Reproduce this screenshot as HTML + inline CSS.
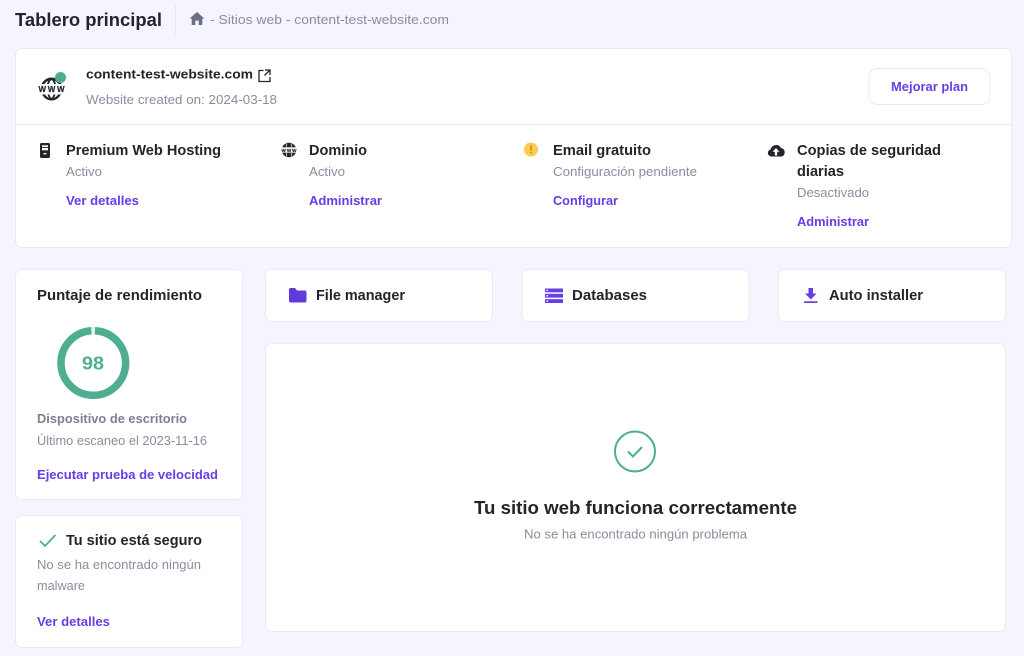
<!DOCTYPE html>
<html lang="es"><head><meta charset="utf-8"><title>Tablero principal</title>
<style>
html,body{margin:0;padding:0;background:#f4f5ff;width:1024px;height:656px;overflow:hidden}
svg{display:block;filter:blur(.3px)}
text{font-family:"Liberation Sans",sans-serif;white-space:pre}
.h{font-weight:700;fill:#23252b;font-size:15px}
.g{fill:#8b8c9f;font-size:13px}
.l{font-weight:700;fill:#673de6;font-size:13px}
.c{fill:#fff;stroke:#e9eaf3;stroke-width:1}
</style></head><body>
<svg width="1024" height="656" viewBox="0 0 1024 656" xmlns="http://www.w3.org/2000/svg">
<rect width="1024" height="656" fill="#f4f5ff"/>
<text x="15" y="26" textLength="147" lengthAdjust="spacingAndGlyphs" font-size="18" font-weight="700" fill="#23252b">Tablero principal</text>
<rect x="175" y="5" width="1" height="29" fill="#e6e7f1"/>
<path d="M197 12l-7.500 6.600h2.200V25h3.600v-4.400h3.400V25h3.600v-6.400h2.200z" fill="#6d6e82"/>
<text x="210" y="24" textLength="239" lengthAdjust="spacingAndGlyphs" class="g">- Sitios web - content-test-website.com</text>

<rect class="c" x="15.500" y="48.500" width="996" height="199" rx="6"/>
<rect x="16" y="124" width="995" height="1" fill="#e8e9f2"/>
<path d="M41.500 84c2.500-4.500 6-6.500 10-6.500s7.500 2 10 6.500h-3c-2-2.800-4.300-4-7-4s-5 1.200-7 4z" fill="#23252b"/>
<path d="M47 84c.8-3 2.200-5.500 4.500-6.500 2.300 1 3.700 3.500 4.500 6.500h-2c-.5-2-1.300-3.300-2.500-4-1.200.7-2 2-2.500 4z" fill="#23252b"/>
<path d="M42 94.500c2.500 4 5.500 6 9.500 6s7-2 9.500-6h-3c-2 2.800-4 3.800-6.500 3.800s-4.500-1-6.500-3.800z" fill="#23252b"/>
<path d="M47.500 94.500c.8 2.500 2 5 4 6 2-1 3.200-3.500 4-6h-2c-.4 1.600-1 2.900-2 3.500-1-.6-1.600-1.900-2-3.500z" fill="#23252b"/>
<text x="38.500" y="92" textLength="26" lengthAdjust="spacing" font-size="8" font-weight="700" fill="#23252b" stroke="#23252b" stroke-width=".2">WWW</text>
<circle cx="60.500" cy="77.500" r="5.500" fill="#4fae91"/>
<text x="86" y="78.500" textLength="167" lengthAdjust="spacingAndGlyphs" font-size="13" font-weight="700" fill="#23252b">content-test-website.com</text>
<path d="M263.500 70.500H259v11h11V77M265 70h5v5M269.800 70.200l-5.300 5.300" fill="none" stroke="#23252b" stroke-width="1.300"/>
<text x="86" y="104" textLength="191" lengthAdjust="spacingAndGlyphs" class="g">Website created on: 2024-03-18</text>
<rect x="869" y="68.500" width="121" height="36" rx="8" fill="#fff" stroke="#e9eaf3"/>
<text x="891" y="91" textLength="77" lengthAdjust="spacingAndGlyphs" class="l">Mejorar plan</text>

<rect x="40" y="143" width="10" height="15" rx="1.500" fill="#23252b"/>
<rect x="42" y="145.300" width="6" height="1.800" fill="#fff"/>
<rect x="42" y="148" width="6" height="2.300" fill="#fff"/>
<rect x="43.500" y="153" width="3" height="1.300" fill="#fff"/>
<text x="66" y="155" textLength="155" lengthAdjust="spacingAndGlyphs" class="h">Premium Web Hosting</text>
<text x="66" y="176" textLength="36" lengthAdjust="spacingAndGlyphs" class="g">Activo</text>
<text x="66" y="205" textLength="73" lengthAdjust="spacingAndGlyphs" class="l">Ver detalles</text>

<circle cx="289" cy="150" r="7.300" fill="#23252b"/>
<rect x="281" y="147.300" width="16" height="5.400" fill="#fff"/>
<path d="M286.700 143.500v3.500M291.300 143.500v3.500M286.700 153v3.500M291.300 153v3.500" stroke="#fff" stroke-width=".7"/>
<text x="281.500" y="152" textLength="15" lengthAdjust="spacing" font-size="4.600" font-weight="700" fill="#23252b" stroke="#23252b" stroke-width=".2">WWW</text>
<text x="309" y="155" textLength="58" lengthAdjust="spacingAndGlyphs" class="h">Dominio</text>
<text x="309" y="176" textLength="36" lengthAdjust="spacingAndGlyphs" class="g">Activo</text>
<text x="309" y="205" textLength="73" lengthAdjust="spacingAndGlyphs" class="l">Administrar</text>

<circle cx="531" cy="149.500" r="7" fill="#fcca4e"/>
<rect x="530.300" y="145.500" width="1.500" height="5" fill="#b48a1e"/>
<rect x="530.300" y="151.800" width="1.500" height="1.500" fill="#b48a1e"/>
<text x="553" y="155" textLength="98" lengthAdjust="spacingAndGlyphs" class="h">Email gratuito</text>
<text x="553" y="176" textLength="144" lengthAdjust="spacingAndGlyphs" class="g">Configuración pendiente</text>
<text x="553" y="205" textLength="65" lengthAdjust="spacingAndGlyphs" class="l">Configurar</text>

<path d="M771.500 156.500a3.600 3.600 0 0 1-.9-7.100 5.600 5.600 0 0 1 10.400-1.400 4.400 4.400 0 0 1 .7 8.500z" fill="#23252b"/>
<path d="M776 148l-3.500 3.800h2.300v3.700h2.400v-3.700h2.300z" fill="#fff"/>
<text x="797" y="155" textLength="144" lengthAdjust="spacingAndGlyphs" class="h">Copias de seguridad</text>
<text x="797" y="176" textLength="47" lengthAdjust="spacingAndGlyphs" class="h">diarias</text>
<text x="797" y="197" textLength="72" lengthAdjust="spacingAndGlyphs" class="g">Desactivado</text>
<text x="797" y="226" textLength="72" lengthAdjust="spacingAndGlyphs" class="l">Administrar</text>

<rect class="c" x="15.500" y="269.500" width="227" height="230" rx="6"/>
<text x="37" y="300" textLength="165" lengthAdjust="spacingAndGlyphs" class="h">Puntaje de rendimiento</text>
<circle cx="93.300" cy="363" r="32.300" fill="none" stroke="#e3f2ee" stroke-width="7.500"/>
<circle cx="93.300" cy="363" r="32.300" fill="none" stroke="#4fae91" stroke-width="7.500" stroke-dasharray="198.900 204" transform="rotate(-87 93.300 363)"/>
<text x="82" y="369.500" textLength="22" lengthAdjust="spacingAndGlyphs" font-size="18" font-weight="700" fill="#4fae91">98</text>
<text x="37" y="423" textLength="150" lengthAdjust="spacingAndGlyphs" font-size="13" font-weight="700" fill="#7e7f92">Dispositivo de escritorio</text>
<text x="37" y="445" textLength="170" lengthAdjust="spacingAndGlyphs" class="g">Último escaneo el 2023-11-16</text>
<text x="37" y="479" textLength="181" lengthAdjust="spacingAndGlyphs" class="l">Ejecutar prueba de velocidad</text>

<rect class="c" x="15.500" y="515.500" width="227" height="132" rx="6"/>
<path d="M40 541l5 5 10.500-11" fill="none" stroke="#4fae91" stroke-width="1.800"/>
<text x="66" y="545" textLength="136" lengthAdjust="spacingAndGlyphs" class="h">Tu sitio está seguro</text>
<text x="37" y="569" textLength="164" lengthAdjust="spacingAndGlyphs" class="g">No se ha encontrado ningún</text>
<text x="37" y="590" textLength="48" lengthAdjust="spacingAndGlyphs" class="g">malware</text>
<text x="37" y="626" textLength="73" lengthAdjust="spacingAndGlyphs" class="l">Ver detalles</text>

<rect class="c" x="265.500" y="269.500" width="227" height="52" rx="6"/>
<path d="M289 289.500a1.500 1.500 0 0 1 1.500-1.500h4.500l2 2.500h7.500a2 2 0 0 1 2 2v8a2 2 0 0 1-2 2h-13.500a2 2 0 0 1-2-2z" fill="#5f3bdc"/>
<text x="316" y="300" textLength="89" lengthAdjust="spacingAndGlyphs" class="h">File manager</text>

<rect class="c" x="522" y="269.500" width="227" height="52" rx="6"/>
<rect x="545" y="288.500" width="18" height="3.800" fill="#673de6"/>
<rect x="545" y="293.800" width="18" height="3.800" fill="#673de6"/>
<rect x="545" y="299.200" width="18" height="3.800" fill="#673de6"/>
<rect x="546.500" y="289.800" width="1.600" height="1.300" fill="#fff"/>
<rect x="546.500" y="295.100" width="1.600" height="1.300" fill="#fff"/>
<rect x="546.500" y="300.500" width="1.600" height="1.300" fill="#fff"/>
<text x="572" y="300" textLength="75" lengthAdjust="spacingAndGlyphs" class="h">Databases</text>

<rect class="c" x="778.500" y="269.500" width="227" height="52" rx="6"/>
<path d="M808.500 288h4.500v5.500h3.500l-5.700 6-5.800-6h3.500z" fill="#673de6"/>
<rect x="804" y="301.300" width="13.500" height="1.700" fill="#673de6"/>
<text x="829" y="300" textLength="94" lengthAdjust="spacingAndGlyphs" class="h">Auto installer</text>

<rect class="c" x="265.500" y="343.500" width="740" height="288" rx="6"/>
<circle cx="635" cy="451.500" r="20" fill="none" stroke="#4fae91" stroke-width="2"/>
<path d="M628 451.500l5 5 9-9.500" fill="none" stroke="#4fae91" stroke-width="2"/>
<text x="474" y="514" textLength="323" lengthAdjust="spacingAndGlyphs" font-size="18" font-weight="700" fill="#23252b">Tu sitio web funciona correctamente</text>
<text x="524" y="538.500" textLength="223" lengthAdjust="spacingAndGlyphs" class="g">No se ha encontrado ningún problema</text>
</svg>
</body></html>
